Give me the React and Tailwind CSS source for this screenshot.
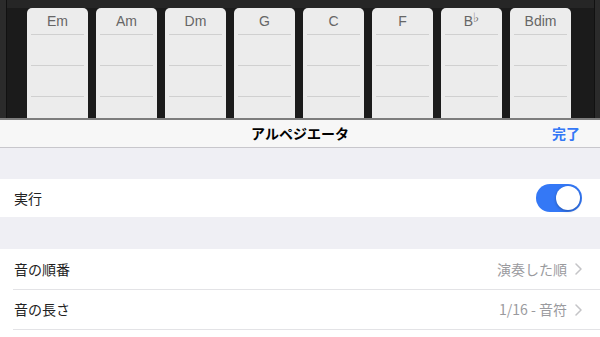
import React from "react";

const chords = [
  { n: "Em" },
  { n: "Am" },
  { n: "Dm" },
  { n: "G" },
  { n: "C" },
  { n: "F" },
  { n: "B", flat: true },
  { n: "Bdim" },
];

function Key({ c }) {
  return (
    <div className="w-[61px] h-[110px] bg-[#ececec] rounded-t-[5px] flex flex-col">
      <div
        className="h-[26px] flex items-center justify-center text-[14px] text-[#666] leading-none pb-[1px]"
        style={{ fontFamily: '"Liberation Sans", Arial, sans-serif' }}
      >
        {c.n}
        {c.flat && (
          <span
            className="text-[13px] relative -top-[3px]"
            style={{ fontFamily: '"DejaVu Sans", sans-serif' }}
          >
            ♭
          </span>
        )}
      </div>
      <div className="h-[1px] bg-[#d0d0d0] mx-[4px]" />
      <div className="h-[30px]" />
      <div className="h-[1px] bg-[#d0d0d0] mx-[4px]" />
      <div className="h-[30px]" />
      <div className="h-[1px] bg-[#d0d0d0] mx-[4px]" />
      <div className="flex-1" />
    </div>
  );
}

function Chevron() {
  return (
    <svg width="7" height="12" viewBox="0 0 7 12" className="ml-[8px]">
      <path d="M1 1 L6 6 L1 11" fill="none" stroke="#c4c4c7" strokeWidth="1.5" strokeLinecap="round" strokeLinejoin="round" />
    </svg>
  );
}

export default function App() {
  return (
    <div
      className="w-[600px] h-[337px] overflow-hidden bg-white"
      style={{ fontFamily: '"Noto Sans CJK JP", "Noto Sans", sans-serif' }}
    >
      <div className="h-[118px] bg-[#1b1b1b] flex">
        <div className="w-[7px] bg-[#2b2b2b] border-r border-[#111]" />
        <div className="flex-1 flex flex-col">
          <div className="h-[8px] bg-[#262626]" />
          <div className="flex-1 flex items-end pl-[20px] gap-[8px]">
            {chords.map((c, i) => (
              <Key key={i} c={c} />
            ))}
          </div>
        </div>
        <div className="w-[6px] bg-[#2b2b2b] border-l border-[#111]" />
      </div>
      <div className="h-[2px] bg-[#7d7d7d]" />
      <div className="h-[28px] bg-[#f7f7f7] border-b border-[#c8c7cc] flex items-center justify-center relative">
        <span className="text-[14px] font-bold text-black">アルペジエータ</span>
        <span className="absolute right-[20px] text-[14px] font-bold text-[#3478f6]">完了</span>
      </div>
      <div className="h-[31px] bg-[#efeff4]" />
      <div className="h-[38px] bg-white flex items-center justify-between pl-[14px] pr-[18px]">
        <span className="text-[14px] text-[#222]">実行</span>
        <div className="w-[46px] h-[28px] rounded-full bg-[#3478f6] flex items-center justify-end p-[2px]">
          <div className="w-[24px] h-[24px] rounded-full bg-white shadow-[0_1px_3px_rgba(0,0,0,0.3)]" />
        </div>
      </div>
      <div className="h-[32px] bg-[#efeff4]" />
      <div className="bg-white pl-[13px]">
        <div className="h-[41px] flex items-center justify-between border-b border-[#e3e3e6] pr-[18px]">
          <span className="pl-[1px] text-[14px] text-[#222]">音の順番</span>
          <span className="flex items-center text-[14px] text-[#9a9a9e]">
            演奏した順
            <Chevron />
          </span>
        </div>
        <div className="h-[40px] flex items-center justify-between border-b border-[#e3e3e6] pr-[18px]">
          <span className="pl-[1px] text-[14px] text-[#222]">音の長さ</span>
          <span className="flex items-center text-[14px] text-[#9a9a9e]">
            1/16 - 音符
            <Chevron />
          </span>
        </div>
      </div>
    </div>
  );
}
